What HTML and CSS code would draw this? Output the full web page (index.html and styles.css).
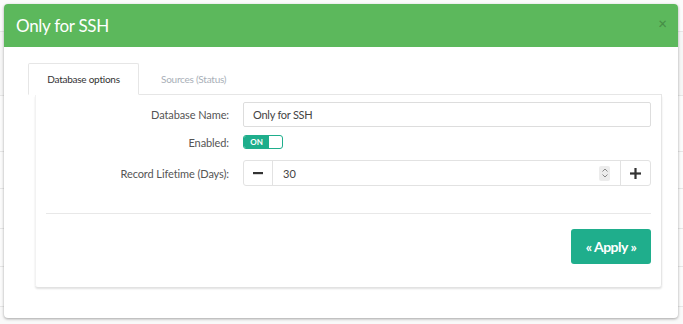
FILE: index.html
```html
<!DOCTYPE html>
<html>
<head>
<meta charset="utf-8">
<link rel="stylesheet" href="styles.css">
</head>
<body>
<div class="page">
  <div class="bg-row r1"></div>
  <div class="bg-row r2"></div>
  <div class="bg-row r3"></div>
  <div class="bg-row r4"></div>
  <div class="bg-row r5"></div>
  <div class="bg-row r6"></div>
  <div class="bg-row r7"></div>
</div>
<div class="modal">
  <div class="modal-header">
    <span class="modal-title">Only for SSH</span>
    <span class="close">×</span>
  </div>
  <div class="modal-body">
    <div class="tabs">
      <div class="tab active">Database options</div>
      <div class="tab">Sources (Status)</div>
    </div>
    <div class="panel">
      <div class="form">
        <div class="row r-name">
          <label class="lbl">Database Name:</label>
          <div class="input">Only for SSH</div>
        </div>
        <div class="row r-enabled">
          <label class="lbl">Enabled:</label>
          <div class="toggle"><span class="on">ON</span><span class="knob"></span></div>
        </div>
        <div class="row r-life">
          <label class="lbl">Record Lifetime (Days):</label>
          <div class="group">
            <span class="gbtn minus"><svg width="10" height="10" viewBox="0 0 10 10"><rect x="0" y="4" width="10" height="2.2" fill="#333"/></svg></span>
            <span class="gval">30<span class="spin"><svg width="8" height="12" viewBox="0 0 8 12"><path d="M1.5 4.5 L4 2 L6.5 4.5 M1.5 7.5 L4 10 L6.5 7.5" stroke="#888" stroke-width="1" fill="none"/></svg></span></span>
            <span class="gbtn plus"><svg width="11" height="11" viewBox="0 0 11 11"><rect x="0" y="4.4" width="11" height="2.2" fill="#333"/><rect x="4.4" y="0" width="2.2" height="11" fill="#333"/></svg></span>
          </div>
        </div>
      </div>
      <div class="hr"></div>
      <div class="actions">
        <button class="apply">« Apply »</button>
      </div>
    </div>
  </div>
</div>
</body>
</html>
```
FILE: styles.css
```css
html, body {
  margin: 0;
  padding: 0;
}
body {
  width: 683px;
  height: 324px;
  background: #f9f9f9;
  font-family: Lato, "Open Sans", sans-serif;
  overflow: hidden;
  position: relative;
}
.page {
  display: flex;
  flex-direction: column;
}
.bg-row {
  border-bottom: 1px solid #e6e6e6;
  background: #fbfbfb;
}
.r1 { height: 31px; }
.r2 { height: 63px; background: #f6f6f6; }
.r3 { height: 55px; }
.r4 { height: 36px; }
.r5 { height: 39px; }
.r6 { height: 37px; }
.r7 { height: 39px; }

.modal {
  position: absolute;
  left: 4px;
  top: 4px;
  width: 674px;
  height: 314px;
  background: #fff;
  border-radius: 4px;
  box-shadow: 0 1px 3px rgba(0,0,0,0.35);
  overflow: hidden;
}
.modal-header {
  height: 43px;
  background: #5cb85c;
  display: flex;
  align-items: center;
  justify-content: space-between;
  padding: 0 12px;
}
.modal-title {
  color: #fff;
  font-size: 17px;
  letter-spacing: -0.3px;
}
.close {
  color: rgba(0,0,0,0.22);
  font-size: 15px;
  font-weight: bold;
  margin-top: -6px;
  margin-right: -1px;
}
.modal-body {
  padding: 16px 16px 0 24px;
}
.tabs {
  display: flex;
  height: 31px;
  border-bottom: 1px solid #e6e6e6;
}
.tab {
  font-size: 10px;
  letter-spacing: -0.25px;
  color: #a9afb8;
  padding: 0 22px;
  display: flex;
  align-items: center;
}
.tab.active {
  width: 111px;
  box-sizing: border-box;
  justify-content: center;
  padding: 0;
  color: #333;
  border: 1px solid #e6e6e6;
  border-bottom: 1px solid #fff;
  margin-bottom: -1px;
  border-radius: 2px 2px 0 0;
}
.panel {
  margin-left: 7px;
  margin-right: 0;
  width: 627px;
  box-sizing: border-box;
  border-left: 1px solid #f2f2f2;
  border-right: 1px solid #e6e6e6;
  box-shadow: 0 2px 2px rgba(0,0,0,0.12);
  border-radius: 0 0 3px 3px;
  padding: 7px 10px 23px 10px;
}
.form {
  display: flex;
  flex-direction: column;
}
.row {
  display: grid;
  grid-template-columns: 183px 1fr;
  column-gap: 14px;
  align-items: center;
}
.r-enabled { margin-top: 8px; }
.r-life { margin-top: 11px; }
.lbl {
  text-align: right;
  font-size: 11px;
  letter-spacing: -0.1px;
  color: #555;
}
.input {
  height: 25px;
  box-sizing: border-box;
  border: 1px solid #ddd;
  border-radius: 2px;
  font-size: 11px;
  letter-spacing: -0.25px;
  color: #444;
  padding: 0 9px;
  display: flex;
  align-items: center;
}
.toggle {
  width: 40px;
  height: 14px;
  box-sizing: border-box;
  border: 1px solid #1fae8c;
  border-radius: 3px;
  display: flex;
  overflow: hidden;
  background: #fff;
}
.on {
  width: 25px;
  background: #1fae8c;
  color: #fff;
  font-size: 8px;
  font-weight: bold;
  display: flex;
  align-items: center;
  justify-content: center;
}
.knob {
  flex: 1;
}
.group {
  display: flex;
  height: 26px;
  box-sizing: border-box;
  border: 1px solid #e2e2e2;
  border-radius: 3px;
}
.gbtn {
  width: 29px;
  display: flex;
  align-items: center;
  justify-content: center;
}
.minus { width: 28px; border-right: 1px solid #e2e2e2; }
.plus { border-left: 1px solid #e2e2e2; }
.gval {
  flex: 1;
  display: flex;
  align-items: center;
  justify-content: space-between;
  padding: 0 10px 0 10px;
  font-size: 11px;
  color: #444;
}
.spin {
  width: 11px;
  height: 15px;
  background: #ececec;
  border-radius: 2px;
  display: flex;
  align-items: center;
  justify-content: center;
}
.hr {
  height: 1px;
  background: #e8e8e8;
  margin-top: 27px;
}
.actions {
  display: flex;
  justify-content: flex-end;
  margin-top: 15px;
}
.apply {
  width: 80px;
  height: 35px;
  background: #1fae8c;
  color: #fff;
  border: none;
  border-radius: 3px;
  font-family: Lato, sans-serif;
  font-size: 14px;
  letter-spacing: -0.5px;
  font-weight: bold;
  padding: 0;
}
```
